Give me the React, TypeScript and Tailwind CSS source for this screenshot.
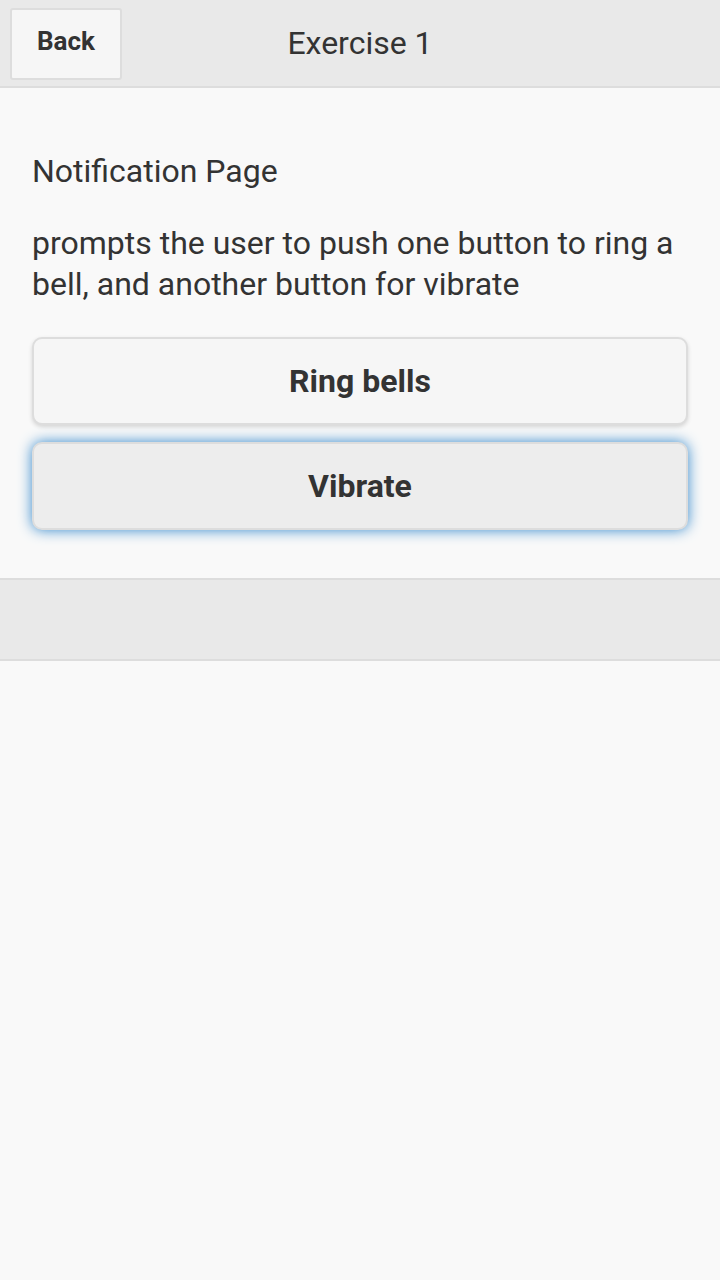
import React from 'react';

const App: React.FC = () => {
  return (
    <div className="min-h-[1280px] bg-[#f9f9f9] text-[#333] font-['Roboto','Liberation_Sans',sans-serif]">
      <div className="relative h-[88px] bg-[#e9e9e9] border-b-2 border-[#dddddd] flex items-center justify-center">
        <button className="absolute left-[10px] top-[8px] w-[112px] h-[72px] pb-[6px] bg-[#f6f6f6] border-2 border-[#dddddd] rounded-[3px] text-[26px] font-bold text-[#333]">
          Back
        </button>
        <h1 className="text-[32px] leading-none">Exercise 1</h1>
      </div>

      <div className="p-8">
        <p className="text-[32px] leading-[41px] mt-[31px] mb-[31px]">Notification Page</p>
        <p className="text-[32px] leading-[41px] mb-[32px]">
          prompts the user to push one button to ring a bell, and another button for vibrate
        </p>
        <div className="flex flex-col gap-[17px]">
          <button className="h-[88px] w-full bg-[#f6f6f6] border-2 border-[#dddddd] rounded-[10px] shadow-[0_2px_4px_rgba(0,0,0,0.15)] text-[32px] font-bold text-[#333]">
            Ring bells
          </button>
          <button className="h-[88px] w-full bg-[#ededed] border-2 border-[#dddddd] rounded-[10px] shadow-[0_0_14px_#3388cc] text-[32px] font-bold text-[#333]">
            Vibrate
          </button>
        </div>
      </div>

      <div className="h-[83px] mt-[16px] bg-[#e9e9e9] border-y-2 border-[#dddddd]" />
    </div>
  );
};

export default App;
